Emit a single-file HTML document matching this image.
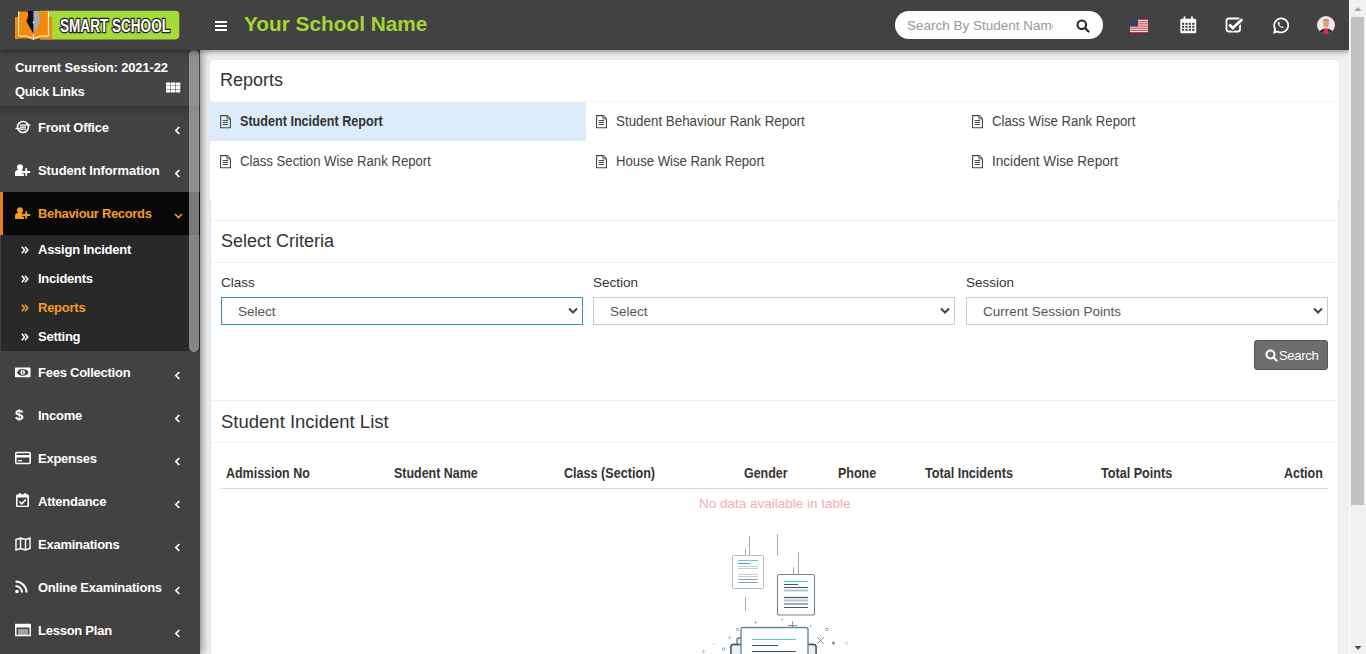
<!DOCTYPE html>
<html><head><meta charset="utf-8">
<style>
*{box-sizing:border-box;margin:0;padding:0}
html,body{width:1366px;height:654px;overflow:hidden;background:#f1f1f1;font-family:"Liberation Sans",sans-serif}
.abs{position:absolute}
#hdr{position:absolute;left:0;top:0;width:1349px;height:50px;background:#424242;z-index:5;box-shadow:0 1px 6px rgba(0,0,0,.55)}
#side{position:absolute;left:0;top:50px;width:200px;height:604px;background:#424242;z-index:4;box-shadow:1px 0 9px rgba(0,0,0,.55)}
#vscroll{position:absolute;left:1349px;top:0;width:17px;height:654px;background:#f1f1f1;z-index:6;border-left:1px solid #fafafa}
.mi{position:absolute;left:0;width:200px;height:43px;color:#fff;font-weight:bold;font-size:13px;letter-spacing:-0.25px}
.mi .t{position:absolute;left:38px;top:14px;white-space:nowrap}
.mi .ch{position:absolute;left:174px;top:20px}
.mi .ic{position:absolute;left:15px;top:14px}
.sub{position:absolute;left:0;width:200px;height:29px;color:#fff;font-weight:bold;font-size:13px;letter-spacing:-0.25px}
.sub .t{position:absolute;left:38px;top:7px;white-space:nowrap}
.sub .ic{position:absolute;left:21px;top:11px}
#content{position:absolute;left:200px;top:50px;width:1149px;height:604px;background:#f1f1f1}
.box{position:absolute;background:#fff}
.t13{font-size:13.2px;color:#444;white-space:nowrap;position:absolute}
.th{position:absolute;top:465px;font-size:14px;font-weight:bold;color:#333;white-space:nowrap;transform:scaleX(0.89);transform-origin:0 0}
</style></head><body>

<div id="hdr">
  <!-- logo -->
  <svg class="abs" style="left:14px;top:10px" width="166" height="31" viewBox="14 10 166 31">
    <path d="M40 10.8 H175.5 Q179.3 10.8 179.3 14.6 V35.6 Q179.3 39.4 175.5 39.4 H40 Z" fill="#a7d93a"/>
    <path d="M15 17 H18.5 V36.5 Q27 35 33.5 39 Q40 35 48.5 36.5 V17 H52.2 V39.2 Q43 37.6 33.5 39.8 Q24 37.6 15 39.2 Z" fill="#f28a0c"/>
    <path d="M18.5 11.5 H27 Q29.5 11.5 29 14 Q27.5 17.5 28.5 20 L33.5 33 V38.5 Q27 35 18.5 36 Z" fill="#f28a0c"/>
    <path d="M48.5 11.5 H40 Q37.5 11.5 38 14 Q39.5 17.5 38.5 20 L33.5 33 V38.5 Q40 35 48.5 36 Z" fill="#f28a0c"/>
    <path d="M18.6 11.5 V36 Q27 34.8 33.5 38.6 Q40 34.8 48.4 36 V11.5" fill="none" stroke="#fff" stroke-width="1"/>
    <path d="M27.5 11 H33.5 V34 L27 22.5 Q26 20.5 27.5 18.5 Q29 15 27.5 11 Z" fill="#111"/>
    <path d="M33.5 11 H39.5 Q38 15 39.5 18.5 Q41 20.5 40 22.5 L33.5 34 Z" fill="#a4acb2"/>
    <circle cx="33.5" cy="22.5" r="0.9" fill="#fff"/>
    <path d="M33.5 34 V40" stroke="#fff" stroke-width="1"/>
    <text x="60" y="31.6" font-family="Liberation Sans" font-weight="bold" font-size="17.5" fill="#fff" stroke="#1e1e1e" stroke-width="2.6" paint-order="stroke" textLength="110" lengthAdjust="spacingAndGlyphs">SMART SCHOOL</text>
  </svg>
  <!-- hamburger -->
  <div class="abs" style="left:215px;top:21px;width:12px;height:2px;background:#fff"></div>
  <div class="abs" style="left:215px;top:25px;width:12px;height:2px;background:#fff"></div>
  <div class="abs" style="left:215px;top:29px;width:12px;height:2px;background:#fff"></div>
  <div class="abs" style="left:244px;top:12px;font-size:20.8px;font-weight:bold;color:#a4d535;white-space:nowrap">Your School Name</div>
  <!-- search -->
  <div class="abs" style="left:895px;top:11px;width:208px;height:28px;background:#fff;border-radius:14px"></div>
  <div class="abs" style="left:907px;top:18px;font-size:13.5px;color:#999;white-space:nowrap;width:146px;overflow:hidden">Search By Student Name</div>
  <svg class="abs" style="left:1076px;top:19px" width="14" height="14" viewBox="0 0 14 14"><circle cx="5.8" cy="5.8" r="4.3" stroke="#222" stroke-width="2" fill="none"/><path d="M9 9 L12.5 12.5" stroke="#222" stroke-width="2.2" stroke-linecap="round"/></svg>
  <!-- flag -->
  <svg class="abs" style="left:1130px;top:19px" width="18" height="14" viewBox="0 0 18 14">
    <rect width="18" height="14" fill="#fff"/>
    <g fill="#c8323c"><rect y="0" width="18" height="1.1"/><rect y="2.15" width="18" height="1.1"/><rect y="4.3" width="18" height="1.1"/><rect y="6.45" width="18" height="1.1"/><rect y="8.6" width="18" height="1.1"/><rect y="10.75" width="18" height="1.1"/><rect y="12.9" width="18" height="1.1"/></g>
    <rect width="8" height="7.5" fill="#3c3b6e"/>
  </svg>
  <!-- calendar -->
  <svg class="abs" style="left:1180px;top:16px" width="17" height="18" viewBox="0 0 17 18">
    <path d="M1.5 2.8 H15 Q16.2 2.8 16.2 4 V16.2 Q16.2 17.3 15 17.3 H1.5 Q0.3 17.3 0.3 16.2 V4 Q0.3 2.8 1.5 2.8 Z" fill="#fff"/>
    <rect x="3.6" y="0.2" width="1.8" height="3.6" rx="0.9" fill="#fff"/><rect x="11.1" y="0.2" width="1.8" height="3.6" rx="0.9" fill="#fff"/>
    <g fill="#424242"><rect x="2" y="6.8" width="2.2" height="2"/><rect x="5.4" y="6.8" width="2.2" height="2"/><rect x="8.8" y="6.8" width="2.2" height="2"/><rect x="12.2" y="6.8" width="2.2" height="2"/>
    <rect x="2" y="9.8" width="2.2" height="2"/><rect x="5.4" y="9.8" width="2.2" height="2"/><rect x="8.8" y="9.8" width="2.2" height="2"/><rect x="12.2" y="9.8" width="2.2" height="2"/>
    <rect x="2" y="12.8" width="2.2" height="2"/><rect x="5.4" y="12.8" width="2.2" height="2"/><rect x="8.8" y="12.8" width="2.2" height="2"/><rect x="12.2" y="12.8" width="2.2" height="2"/></g>
  </svg>
  <!-- checkbox -->
  <svg class="abs" style="left:1225px;top:17px" width="19" height="16" viewBox="0 0 19 16">
    <rect x="1.5" y="1.5" width="13.5" height="13" rx="2" fill="none" stroke="#fff" stroke-width="1.8"/>
    <path d="M3.8 7.2 L7.8 11 L17.5 2.2" stroke="#424242" stroke-width="5" fill="none"/>
    <path d="M4.2 7.5 L7.8 11 L17.3 2.3" stroke="#fff" stroke-width="2.9" fill="none"/>
  </svg>
  <!-- whatsapp -->
  <svg class="abs" style="left:1272px;top:17px" width="17" height="17" viewBox="0 0 17 17">
    <path d="M2.2 15.5 L3.2 12 A7 7 0 1 1 5.6 14.4 Z" fill="none" stroke="#fff" stroke-width="1.7"/>
    <path d="M6 5 Q5.5 6 6.2 7.8 Q7.5 10.2 10 11 Q11.2 11.3 11.6 10.4 L10.3 9.3 L9.6 9.9 Q8 9.2 7.3 7.4 L7.9 6.6 L7 4.8 Z" fill="#fff"/>
  </svg>
  <!-- avatar -->
  <svg class="abs" style="left:1317px;top:16px" width="18" height="18" viewBox="0 0 18 18">
    <defs><clipPath id="av"><circle cx="9" cy="9" r="9"/></clipPath></defs>
    <g clip-path="url(#av)"><rect width="18" height="18" fill="#ece8e6"/>
    <ellipse cx="9" cy="7.5" rx="3" ry="4" fill="#d4a58c"/>
    <path d="M6 4 Q9 2 12 4 L12 5 Q9 4 6 5 Z" fill="#b08060"/>
    <path d="M1 18 Q3 12.5 9 12.5 Q15 12.5 17 18 Z" fill="#2b2b2b"/>
    <path d="M6 18 L7 13 L11 13 L12 18 Z" fill="#e8245a"/></g>
  </svg>
</div>

<div id="side">
  <div class="abs" style="left:0;top:56px;width:200px;height:9px;background:linear-gradient(#353535,#424242)"></div><div class="abs" style="left:0;top:0;width:200px;height:56px;background:#454545"></div>
  <div class="abs" style="left:15px;top:10px;font-size:13px;font-weight:bold;color:#fff;letter-spacing:-0.13px;white-space:nowrap">Current Session: 2021-22</div>
  <div class="abs" style="left:15px;top:34px;font-size:13px;font-weight:bold;color:#fff;letter-spacing:-0.4px;white-space:nowrap">Quick Links</div>
  <svg class="abs" style="left:166px;top:32px" width="15" height="11" viewBox="0 0 15 11"><g fill="#fff"><rect x="0" y="0.5" width="4.5" height="3.1"/><rect x="5" y="0.5" width="4.3" height="3.1"/><rect x="9.8" y="0.5" width="4.5" height="3.1"/><rect x="0" y="4" width="4.5" height="3"/><rect x="5" y="4" width="4.3" height="3"/><rect x="9.8" y="4" width="4.5" height="3"/><rect x="0" y="7.5" width="4.5" height="3"/><rect x="5" y="7.5" width="4.3" height="3"/><rect x="9.8" y="7.5" width="4.5" height="3"/></g></svg>

  <div class="mi" style="top:56px"><svg class="ic" width="16" height="14" viewBox="0 0 16 14"><circle cx="8" cy="7" r="5.5" fill="none" stroke="#fff" stroke-width="1.6"/><rect x="5" y="4.5" width="6" height="1.3" fill="#fff"/><rect x="5" y="6.5" width="6" height="1.3" fill="#fff"/><rect x="5" y="8.5" width="6" height="1.3" fill="#fff"/><path d="M0.5 8.5 L5 8.5" stroke="#fff" stroke-width="1.3"/><path d="M11 5 L15.5 5" stroke="#fff" stroke-width="1.3"/></svg><span class="t">Front Office</span><svg class="ch" width="7" height="9" viewBox="0 0 7 9"><path d="M5.3 1 L1.9 4.5 L5.3 8" stroke="#fff" stroke-width="1.7" fill="none"/></svg></div>
  <div class="mi" style="top:99px"><svg class="ic" width="16" height="14" viewBox="0 0 16 14"><circle cx="5" cy="4.3" r="3" fill="#fff"/><path d="M0 13 V10.2 Q0 7 3 7 H7 Q9 7 9 9 V13 Z" fill="#fff"/><path d="M11.2 5.3 V12.8 M7.3 9 H15.2" stroke="#424242" stroke-width="3.6"/><path d="M11.2 5.3 V12.8 M7.3 9 H15.2" stroke="#fff" stroke-width="1.9"/></svg><span class="t" style="letter-spacing:-0.1px">Student Information</span><svg class="ch" width="7" height="9" viewBox="0 0 7 9"><path d="M5.3 1 L1.9 4.5 L5.3 8" stroke="#fff" stroke-width="1.7" fill="none"/></svg></div>
  <div class="mi" style="top:142px;height:43px;background:#080808;color:#f39c22"><div class="abs" style="left:0;top:0;width:3px;height:43px;background:#e8801a"></div><svg class="ic" width="16" height="14" viewBox="0 0 16 14"><circle cx="5" cy="4.3" r="3" fill="#f39c22"/><path d="M0 13 V10.2 Q0 7 3 7 H7 Q9 7 9 9 V13 Z" fill="#f39c22"/><path d="M11.2 5.3 V12.8 M7.3 9 H15.2" stroke="#080808" stroke-width="3.6"/><path d="M11.2 5.3 V12.8 M7.3 9 H15.2" stroke="#f39c22" stroke-width="1.9"/></svg><span class="t" style="letter-spacing:-0.33px">Behaviour Records</span><svg class="ch" style="top:21px" width="9" height="6" viewBox="0 0 9 6"><path d="M1 1 L4.5 4.5 L8 1" stroke="#f39c22" stroke-width="1.6" fill="none"/></svg></div>
  <div class="abs" style="left:1px;top:185px;width:199px;height:116px;background:#292929"></div>
  <div class="sub" style="top:185px"><svg class="ic" width="8" height="8" viewBox="0 0 8 8"><path d="M0.8 0.8 L3.6 4 L0.8 7.2 M4 0.8 L6.8 4 L4 7.2" stroke="#fff" stroke-width="1.5" fill="none"/></svg><span class="t">Assign Incident</span></div>
  <div class="sub" style="top:214px"><svg class="ic" width="8" height="8" viewBox="0 0 8 8"><path d="M0.8 0.8 L3.6 4 L0.8 7.2 M4 0.8 L6.8 4 L4 7.2" stroke="#fff" stroke-width="1.5" fill="none"/></svg><span class="t">Incidents</span></div>
  <div class="sub" style="top:243px;color:#f39c22"><svg class="ic" width="8" height="8" viewBox="0 0 8 8"><path d="M0.8 0.8 L3.6 4 L0.8 7.2 M4 0.8 L6.8 4 L4 7.2" stroke="#f39c22" stroke-width="1.5" fill="none"/></svg><span class="t">Reports</span></div>
  <div class="sub" style="top:272px"><svg class="ic" width="8" height="8" viewBox="0 0 8 8"><path d="M0.8 0.8 L3.6 4 L0.8 7.2 M4 0.8 L6.8 4 L4 7.2" stroke="#fff" stroke-width="1.5" fill="none"/></svg><span class="t">Setting</span></div>

  <div class="mi" style="top:301px"><svg class="ic" width="16" height="14" viewBox="0 0 16 14"><rect x="0" y="2.5" width="15.5" height="9.8" rx="0.8" fill="#fff"/><ellipse cx="7.75" cy="7.4" rx="5.6" ry="3.3" fill="#424242"/><circle cx="7.75" cy="7.4" r="2.3" fill="#fff"/><rect x="7.1" y="6" width="1.3" height="3" fill="#777"/></svg><span class="t">Fees Collection</span><svg class="ch" width="7" height="9" viewBox="0 0 7 9"><path d="M5.3 1 L1.9 4.5 L5.3 8" stroke="#fff" stroke-width="1.7" fill="none"/></svg></div>
  <div class="mi" style="top:344px"><svg class="ic" width="16" height="16" style="top:13px" viewBox="0 0 16 16"><text x="0" y="13" font-size="15" font-weight="bold" fill="#fff" font-family="Liberation Sans">$</text></svg><span class="t">Income</span><svg class="ch" width="7" height="9" viewBox="0 0 7 9"><path d="M5.3 1 L1.9 4.5 L5.3 8" stroke="#fff" stroke-width="1.7" fill="none"/></svg></div>
  <div class="mi" style="top:387px"><svg class="ic" width="16" height="14" viewBox="0 0 16 14"><rect x="0.8" y="1.5" width="14.4" height="11" rx="1" fill="none" stroke="#fff" stroke-width="1.6"/><rect x="1" y="4" width="14" height="2.5" fill="#fff"/><rect x="3" y="9" width="4" height="1.4" fill="#fff"/></svg><span class="t">Expenses</span><svg class="ch" width="7" height="9" viewBox="0 0 7 9"><path d="M5.3 1 L1.9 4.5 L5.3 8" stroke="#fff" stroke-width="1.7" fill="none"/></svg></div>
  <div class="mi" style="top:430px"><svg class="ic" width="16" height="14" viewBox="0 0 16 14" style="top:13px"><rect x="1.8" y="2" width="11.4" height="11.5" rx="1" fill="none" stroke="#fff" stroke-width="1.6"/><rect x="2" y="2" width="11" height="2.5" fill="#fff"/><rect x="4" y="0" width="1.8" height="3" fill="#fff"/><rect x="9.2" y="0" width="1.8" height="3" fill="#fff"/><path d="M4.5 8.5 L6.8 10.8 L10.8 6.5" stroke="#fff" stroke-width="1.5" fill="none"/></svg><span class="t">Attendance</span><svg class="ch" width="7" height="9" viewBox="0 0 7 9"><path d="M5.3 1 L1.9 4.5 L5.3 8" stroke="#fff" stroke-width="1.7" fill="none"/></svg></div>
  <div class="mi" style="top:473px"><svg class="ic" width="16" height="14" viewBox="0 0 16 14"><path d="M1 2.5 L5.5 1 L10.5 2.5 L15 1 L15 11.5 L10.5 13 L5.5 11.5 L1 13 Z M5.5 1 L5.5 11.5 M10.5 2.5 L10.5 13" fill="none" stroke="#fff" stroke-width="1.4"/></svg><span class="t">Examinations</span><svg class="ch" width="7" height="9" viewBox="0 0 7 9"><path d="M5.3 1 L1.9 4.5 L5.3 8" stroke="#fff" stroke-width="1.7" fill="none"/></svg></div>
  <div class="mi" style="top:516px"><svg class="ic" width="16" height="14" viewBox="0 0 16 14"><circle cx="2" cy="11.5" r="1.8" fill="#fff"/><path d="M0.5 6 A6.5 6.5 0 0 1 7 12.5 M0.5 1.5 A11 11 0 0 1 11.5 12.5" fill="none" stroke="#fff" stroke-width="2"/></svg><span class="t">Online Examinations</span><svg class="ch" width="7" height="9" viewBox="0 0 7 9"><path d="M5.3 1 L1.9 4.5 L5.3 8" stroke="#fff" stroke-width="1.7" fill="none"/></svg></div>
  <div class="mi" style="top:559px"><svg class="ic" width="16" height="14" viewBox="0 0 16 14"><rect x="0.8" y="1.5" width="14.4" height="11" fill="none" stroke="#fff" stroke-width="1.5"/><rect x="1" y="1.5" width="14" height="3" fill="#fff"/><rect x="3" y="6.5" width="10" height="1" fill="#fff"/><rect x="3" y="8.5" width="10" height="1" fill="#fff"/><rect x="3" y="10.5" width="10" height="1" fill="#fff"/></svg><span class="t">Lesson Plan</span><svg class="ch" width="7" height="9" viewBox="0 0 7 9"><path d="M5.3 1 L1.9 4.5 L5.3 8" stroke="#fff" stroke-width="1.7" fill="none"/></svg></div>
  <!-- sidebar scroll thumb -->
  <div class="abs" style="left:189px;top:0;width:10px;height:302px;border-radius:5px;background:rgba(190,190,190,.62)"></div>
</div>

<div id="vscroll">
  <svg class="abs" style="left:4px;top:6px" width="8" height="6" viewBox="0 0 8 6"><path d="M0.5 5 L4 1 L7.5 5 Z" fill="#a3a3a3"/></svg>
  <div class="abs" style="left:1px;top:17px;width:13px;height:488px;background:#c1c1c1"></div>
  <svg class="abs" style="left:4px;top:645px" width="8" height="6" viewBox="0 0 8 6"><path d="M0.5 1 L4 5 L7.5 1 Z" fill="#505050"/></svg>
</div>

<!-- content -->
<div class="box" style="left:210px;top:60px;width:1129px;height:150px;border-radius:3px;box-shadow:0 1px 1px rgba(0,0,0,.1),0 0 1px rgba(0,0,0,.25)">
  <div class="abs" style="left:10px;top:10px;font-size:18px;color:#333;white-space:nowrap">Reports</div>
  <div class="abs" style="left:0;top:41px;width:1129px;height:1px;background:#f4f4f4"></div>
</div>
<div class="abs" style="left:210px;top:102px;width:376px;height:39px;background:#ddecfb"></div>

<div class="box" style="left:210px;top:200px;width:1129px;height:454px;border-left:1px solid #e2e9f1;border-right:1px solid #e2e9f1">
  <div class="abs" style="left:0;top:20px;width:1129px;height:1px;background:#f1f1f1"></div>
  <div class="abs" style="left:10px;top:31px;font-size:18px;color:#333;white-space:nowrap">Select Criteria</div>
  <div class="abs" style="left:0;top:62px;width:1129px;height:1px;background:#f1f1f1"></div>
  <div class="abs" style="left:0;top:200px;width:1129px;height:1px;background:#f1f1f1"></div>
  <div class="abs" style="left:10px;top:211px;font-size:18.5px;color:#333;white-space:nowrap">Student Incident List</div>
  <div class="abs" style="left:0;top:242px;width:1129px;height:1px;background:#f1f1f1"></div>
</div>
<svg class="abs" style="left:220px;top:115px" width="11" height="14" viewBox="0 0 11 14"><path d="M0.6 0.6 H7.2 L10.4 3.8 V12.8 H0.6 Z" fill="none" stroke="#4a4a4a" stroke-width="1.1"/><path d="M6.9 0.8 V3.9 H10.2" fill="none" stroke="#4a4a4a" stroke-width="0.9"/><path d="M2.8 5.5 H8 M2.8 7.5 H8 M2.8 9.5 H8" stroke="#4a4a4a" stroke-width="1"/></svg>
<div class="abs" style="left:240px;top:113px;font-weight:bold;font-size:14px;color:#333;white-space:nowrap;transform:scaleX(0.9);transform-origin:0 0">Student Incident Report</div>
<svg class="abs" style="left:596px;top:115px" width="11" height="14" viewBox="0 0 11 14"><path d="M0.6 0.6 H7.2 L10.4 3.8 V12.8 H0.6 Z" fill="none" stroke="#4a4a4a" stroke-width="1.1"/><path d="M6.9 0.8 V3.9 H10.2" fill="none" stroke="#4a4a4a" stroke-width="0.9"/><path d="M2.8 5.5 H8 M2.8 7.5 H8 M2.8 9.5 H8" stroke="#4a4a4a" stroke-width="1"/></svg>
<div class="abs" style="left:616px;top:113px;font-size:14px;color:#444;white-space:nowrap;transform:scaleX(0.955);transform-origin:0 0">Student Behaviour Rank Report</div>
<svg class="abs" style="left:972px;top:115px" width="11" height="14" viewBox="0 0 11 14"><path d="M0.6 0.6 H7.2 L10.4 3.8 V12.8 H0.6 Z" fill="none" stroke="#4a4a4a" stroke-width="1.1"/><path d="M6.9 0.8 V3.9 H10.2" fill="none" stroke="#4a4a4a" stroke-width="0.9"/><path d="M2.8 5.5 H8 M2.8 7.5 H8 M2.8 9.5 H8" stroke="#4a4a4a" stroke-width="1"/></svg>
<div class="abs" style="left:992px;top:113px;font-size:14px;color:#444;white-space:nowrap;transform:scaleX(0.94);transform-origin:0 0">Class Wise Rank Report</div>
<svg class="abs" style="left:220px;top:155px" width="11" height="14" viewBox="0 0 11 14"><path d="M0.6 0.6 H7.2 L10.4 3.8 V12.8 H0.6 Z" fill="none" stroke="#4a4a4a" stroke-width="1.1"/><path d="M6.9 0.8 V3.9 H10.2" fill="none" stroke="#4a4a4a" stroke-width="0.9"/><path d="M2.8 5.5 H8 M2.8 7.5 H8 M2.8 9.5 H8" stroke="#4a4a4a" stroke-width="1"/></svg>
<div class="abs" style="left:240px;top:153px;font-size:14px;color:#444;white-space:nowrap;transform:scaleX(0.94);transform-origin:0 0">Class Section Wise Rank Report</div>
<svg class="abs" style="left:596px;top:155px" width="11" height="14" viewBox="0 0 11 14"><path d="M0.6 0.6 H7.2 L10.4 3.8 V12.8 H0.6 Z" fill="none" stroke="#4a4a4a" stroke-width="1.1"/><path d="M6.9 0.8 V3.9 H10.2" fill="none" stroke="#4a4a4a" stroke-width="0.9"/><path d="M2.8 5.5 H8 M2.8 7.5 H8 M2.8 9.5 H8" stroke="#4a4a4a" stroke-width="1"/></svg>
<div class="abs" style="left:616px;top:153px;font-size:14px;color:#444;white-space:nowrap;transform:scaleX(0.94);transform-origin:0 0">House Wise Rank Report</div>
<svg class="abs" style="left:972px;top:155px" width="11" height="14" viewBox="0 0 11 14"><path d="M0.6 0.6 H7.2 L10.4 3.8 V12.8 H0.6 Z" fill="none" stroke="#4a4a4a" stroke-width="1.1"/><path d="M6.9 0.8 V3.9 H10.2" fill="none" stroke="#4a4a4a" stroke-width="0.9"/><path d="M2.8 5.5 H8 M2.8 7.5 H8 M2.8 9.5 H8" stroke="#4a4a4a" stroke-width="1"/></svg>
<div class="abs" style="left:992px;top:153px;font-size:14px;color:#444;white-space:nowrap;transform:scaleX(0.97);transform-origin:0 0">Incident Wise Report</div>
<div class="abs" style="left:221px;top:275px;font-size:13.5px;color:#333;white-space:nowrap">Class</div>
<div class="abs" style="left:593px;top:275px;font-size:13.5px;color:#333;white-space:nowrap">Section</div>
<div class="abs" style="left:966px;top:275px;font-size:13.5px;color:#333;white-space:nowrap">Session</div>
<div class="abs" style="left:221px;top:297px;width:362px;height:28px;border:1px solid #3c8dbc"></div>
<div class="abs" style="left:593px;top:297px;width:362px;height:28px;border:1px solid #cccccc"></div>
<div class="abs" style="left:966px;top:297px;width:362px;height:28px;border:1px solid #cccccc"></div>
<div class="abs" style="left:238px;top:304px;font-size:13.5px;color:#555;white-space:nowrap">Select</div>
<div class="abs" style="left:610px;top:304px;font-size:13.5px;color:#555;white-space:nowrap">Select</div>
<div class="abs" style="left:983px;top:304px;font-size:13.5px;color:#555;white-space:nowrap">Current Session Points</div>
<svg class="abs" style="left:568px;top:307px" width="10" height="8" viewBox="0 0 10 8"><path d="M1 1.5 L5 5.5 L9 1.5" stroke="#444" stroke-width="2" fill="none"/></svg>
<svg class="abs" style="left:940px;top:307px" width="10" height="8" viewBox="0 0 10 8"><path d="M1 1.5 L5 5.5 L9 1.5" stroke="#444" stroke-width="2" fill="none"/></svg>
<svg class="abs" style="left:1313px;top:307px" width="10" height="8" viewBox="0 0 10 8"><path d="M1 1.5 L5 5.5 L9 1.5" stroke="#444" stroke-width="2" fill="none"/></svg>
<div class="abs" style="left:1254px;top:340px;width:74px;height:30px;background:#6d6d6d;border:1px solid #555;border-radius:3px"></div>
<svg class="abs" style="left:1265px;top:349px" width="13" height="13" viewBox="0 0 13 13"><circle cx="5.5" cy="5.5" r="4" stroke="#fff" stroke-width="2" fill="none"/><path d="M8.5 8.5 L11.5 11.5" stroke="#fff" stroke-width="2.2" stroke-linecap="round"/></svg>
<div class="abs" style="left:1279px;top:348px;font-size:13px;color:#fff;white-space:nowrap;letter-spacing:-0.3px">Search</div>

<div class="th" style="left:226px">Admission No</div>
<div class="th" style="left:394px">Student Name</div>
<div class="th" style="left:564px;transform:scaleX(0.9)">Class (Section)</div>
<div class="th" style="left:744px">Gender</div>
<div class="th" style="left:838px">Phone</div>
<div class="th" style="left:925px;transform:scaleX(0.9)">Total Incidents</div>
<div class="th" style="left:1101px;transform:scaleX(0.9)">Total Points</div>
<div class="th" style="left:1284px">Action</div>
<div class="abs" style="left:221px;top:488px;width:1107px;height:1px;background:#d9d9d9"></div>
<div class="abs" style="left:699px;top:496px;font-size:13.5px;color:#f6acb3;white-space:nowrap">No data available in table</div>


<svg class="abs" style="left:690px;top:525px" width="170" height="129" viewBox="690 525 170 129">
 <g stroke="#a9aeb3" stroke-width="1" fill="none">
  <path d="M749.5 536 V556 M745.5 549 V556 M777.5 534 V556 M798.5 552 V576 M793.5 567 V576 M745.5 597 V611"/>
 </g>
 <rect x="732.5" y="555.5" width="31" height="33" rx="1.5" fill="#fff" stroke="#b8bfc6" stroke-width="1"/>
 <g stroke-width="1">
  <path d="M738 560.5 H758" stroke="#5fd0c8"/>
  <path d="M738 563.5 H750" stroke="#7a8da3"/>
  <path d="M738 566.5 H758 M738 568.5 H758 M738 574.5 H758 M738 576.5 H758" stroke="#c5cdd6"/>
  <path d="M738 579.5 H758 M738 582.5 H758" stroke="#8da0b3"/>
 </g>
 <rect x="777.5" y="574.5" width="37" height="40.5" rx="2" fill="#fff" stroke="#71869c" stroke-width="1.1"/>
 <g stroke-width="1.2">
  <path d="M784 581.5 H808" stroke="#4fcfc4"/>
  <path d="M784 584.5 H798 M784 587.5 H808" stroke="#3e5673"/>
  <path d="M784 590.5 H808" stroke="#b8c3cf" stroke-width="2"/>
  <path d="M784 597.5 H808" stroke="#3e5673"/>
  <path d="M784 600.5 H808" stroke="#b8c3cf" stroke-width="2"/>
  <path d="M784 604 H808 M784 607.5 H808" stroke="#3e5673"/>
 </g>
 <path d="M731 654 V647 Q731 644.5 733.5 644.5 H737 V640 Q737 638 739 638 H742 M807 644.5 H813.5 Q816 644.5 816 647 V654" fill="#eef1f4" stroke="#5b6f86" stroke-width="1.3"/>
 <rect x="731" y="645" width="10" height="9" fill="#eef1f4"/>
 <rect x="807" y="645" width="9" height="9" fill="#eef1f4"/>
 <path d="M731 654 V647 Q731 644.5 733.5 644.5 H741 M807 644.5 H813.5 Q816 644.5 816 647 V654" fill="none" stroke="#3f4d5c" stroke-width="1.3"/>
 <path d="M741 656 V629.5 Q741 627.5 743 627.5 H806 Q808 627.5 808 629.5 V656" fill="#fff" stroke="#6f849b" stroke-width="1.4"/>
 <path d="M752 639.5 H796" stroke="#4fcfc4" stroke-width="1.2"/>
 <path d="M752 645.5 H778 M752 651.5 H796" stroke="#3e5673" stroke-width="1.2"/>
 <g stroke="#8c96a0" stroke-width="0.9" fill="none">
  <circle cx="737.5" cy="629.5" r="1.2"/><ellipse cx="827" cy="629.5" rx="1.6" ry="1.1"/><ellipse cx="723.5" cy="649" rx="1.1" ry="1.4"/>
 </g>
 <g stroke="#6f7a85" stroke-width="0.8" fill="none">
  <path d="M817 637 L824 644 M824 637 L817 644"/>
  <path d="M788 625.5 H797 M792.5 621 V627"/>
 </g>
 <g stroke="#b5bcc3" stroke-width="0.8" fill="none">
  <path d="M729.5 635.5 V639.5 M727.5 637.5 H731.5"/>
  <path d="M703.5 649.5 V653.5 M701.5 651.5 H705.5"/>
  <path d="M845 641.5 L848 644.5 M848 641.5 L845 644.5"/>
  <path d="M712.5 643 L714.5 645"/>
 </g>
 <g fill="#7d8790"><circle cx="833.5" cy="643" r="1.5"/><circle cx="755.5" cy="622.5" r="1"/><circle cx="782" cy="619.5" r="0.8"/><circle cx="810.5" cy="626" r="0.8"/></g>
</svg>

</body></html>
